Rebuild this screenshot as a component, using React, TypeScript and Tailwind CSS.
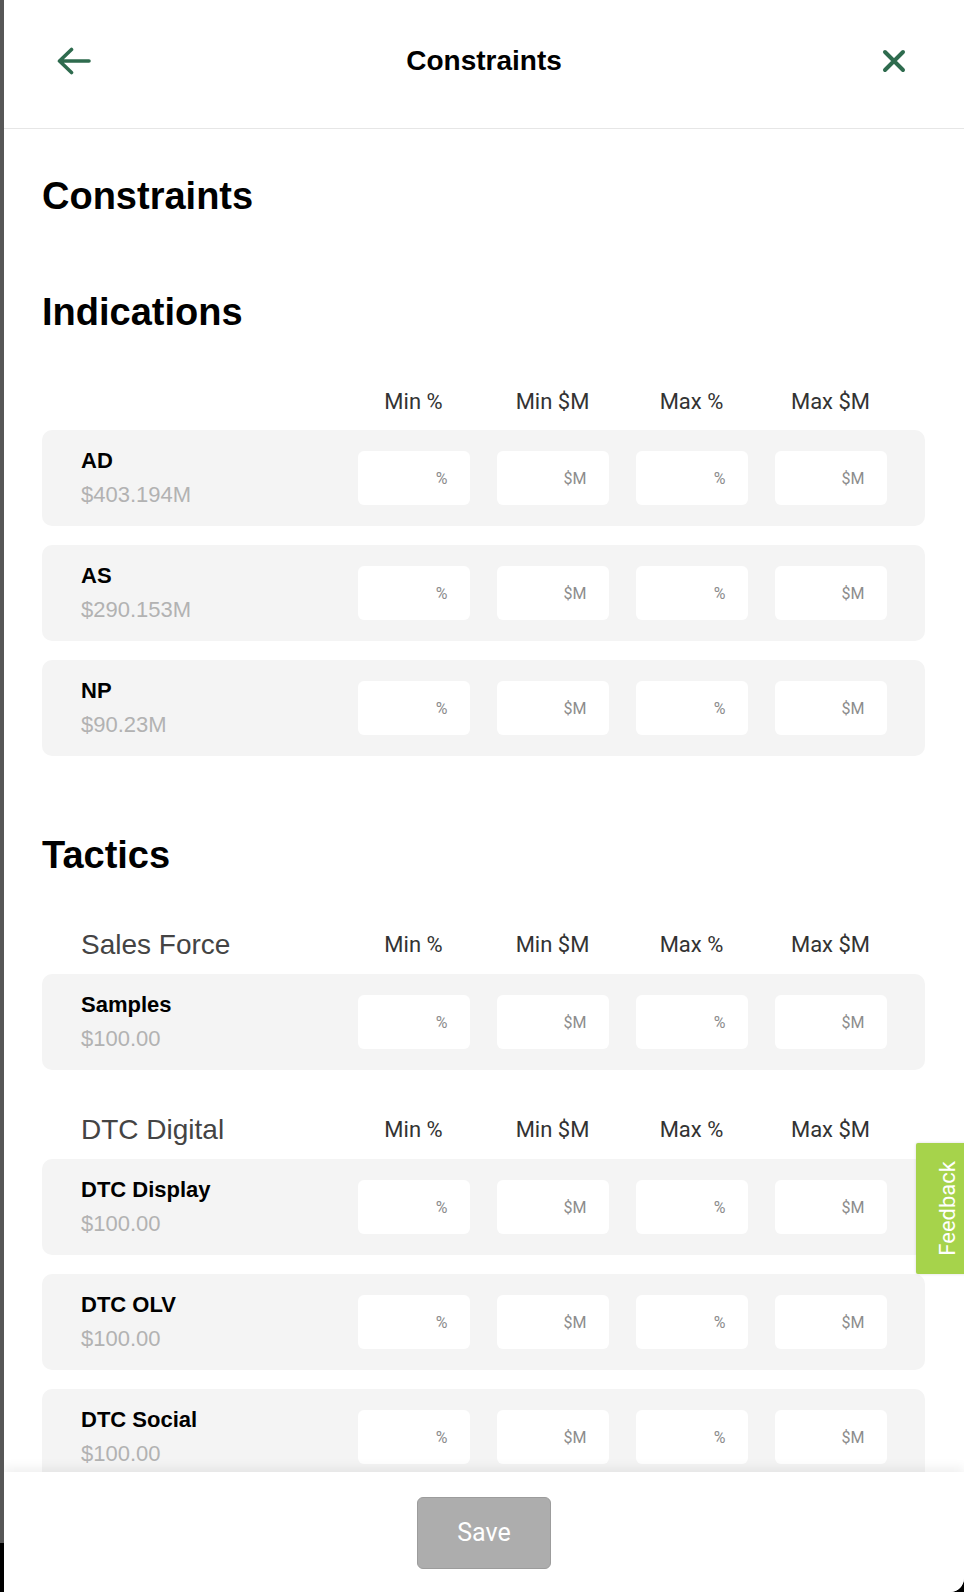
import React from "react";

const HEAD = { fontFamily: '"Liberation Sans", Arial, sans-serif' };
const UI = { fontFamily: 'Roboto, "Noto Sans", sans-serif' };

const COLS = ["Min %", "Min $M", "Max %", "Max $M"];
const PH = ["%", "$M", "%", "$M"];

function HeaderRow({ label, className }: { label?: string; className?: string }) {
  return (
    <div
      className={
        "grid grid-cols-[1fr_139px_139px_139px_139px] items-end pl-[39px] pr-[25px] " +
        (className ?? "")
      }
    >
      <div className="text-[28px] leading-[34px] text-[#444444]" style={HEAD}>
        {label ?? ""}
      </div>
      {COLS.map((c) => (
        <div
          key={c}
          className="pb-[3px] text-center text-[22px] leading-[28px] text-[#333333]"
          style={UI}
        >
          {c}
        </div>
      ))}
    </div>
  );
}

function Row({ name, value, className }: { name: string; value: string; className?: string }) {
  return (
    <div
      className={
        "grid h-[96px] grid-cols-[1fr_139px_139px_139px_139px] items-center rounded-[10px] bg-[#f4f4f4] pl-[39px] pr-[25px] " +
        (className ?? "")
      }
    >
      <div style={HEAD}>
        <div className="text-[22px] font-bold leading-[34px] text-black">{name}</div>
        <div className="text-[22px] leading-[34px] text-[#b2b2b2]">{value}</div>
      </div>
      {PH.map((p, i) => (
        <div key={i} className="flex justify-center">
          <input
            placeholder={p}
            className="h-[54px] w-[112px] rounded-[6px] bg-white pr-[22px] text-right text-[16px] text-[#333] outline-none placeholder:text-[#8c8c8c]"
            style={UI}
          />
        </div>
      ))}
    </div>
  );
}

export default function App() {
  return (
    <div className="relative flex h-[1592px] w-[964px] overflow-hidden bg-black">
      <div className="h-[1543px] w-[4px] shrink-0 bg-[#575757]" />
      <div className="flex h-full w-[960px] flex-col overflow-hidden rounded-br-[14px] bg-white">
        {/* Header */}
        <div className="relative flex h-[129px] shrink-0 items-center justify-between border-b border-[#e6e6e6] pb-[6px] pl-[53px] pr-[58px]">
          <svg width="34" height="28" viewBox="0 0 34 28" fill="none">
            <path
              d="M2.5 14H32M14.5 2.5L2.5 14L14.5 25.5"
              stroke="#2e6b4e"
              strokeWidth="3.6"
              strokeLinecap="round"
              strokeLinejoin="round"
            />
          </svg>
          <div
            className="absolute left-0 right-0 top-[45px] text-center text-[28px] font-bold leading-[32px] text-black"
            style={HEAD}
          >
            Constraints
          </div>
          <svg width="24" height="24" viewBox="0 0 24 24" fill="none">
            <path d="M3 3L21 21M21 3L3 21" stroke="#2e6b4e" strokeWidth="4" strokeLinecap="round" />
          </svg>
        </div>

        {/* Content */}
        <div className="min-h-0 flex-1 overflow-hidden pl-[38px] pr-[39px]">
          <h1 className="mt-[44px] text-[38px] font-bold leading-[46px] text-black" style={HEAD}>
            Constraints
          </h1>
          <h2 className="mt-[70px] text-[38px] font-bold leading-[46px] text-black" style={HEAD}>
            Indications
          </h2>
          <div className="mt-[53px] grid h-[28px] grid-cols-[1fr_139px_139px_139px_139px] pl-[39px] pr-[25px]">
            <div />
            {COLS.map((c) => (
              <div key={c} className="text-center text-[22px] leading-[28px] text-[#333333]" style={UI}>
                {c}
              </div>
            ))}
          </div>
          <div className="mt-[14px] flex flex-col gap-[19px]">
            <Row name="AD" value="$403.194M" />
            <Row name="AS" value="$290.153M" />
            <Row name="NP" value="$90.23M" />
          </div>

          <h2 className="mt-[76px] text-[38px] font-bold leading-[46px] text-black" style={HEAD}>
            Tactics
          </h2>
          <HeaderRow label="Sales Force" className="mt-[50px]" />
          <div className="mt-[12px] flex flex-col gap-[19px]">
            <Row name="Samples" value="$100.00" />
          </div>
          <HeaderRow label="DTC Digital" className="mt-[43px]" />
          <div className="mt-[12px] flex flex-col gap-[19px]">
            <Row name="DTC Display" value="$100.00" />
            <Row name="DTC OLV" value="$100.00" />
            <Row name="DTC Social" value="$100.00" />
          </div>
        </div>

        {/* Footer */}
        <div className="relative z-10 flex h-[120px] shrink-0 items-center justify-center bg-white pt-[2px] shadow-[0_-5px_10px_rgba(0,0,0,0.06)]">
          <button
            className="h-[72px] w-[134px] rounded-[6px] border border-[#9c9c9c] bg-[#adadad] text-[25px] text-white"
            style={UI}
          >
            Save
          </button>
        </div>
      </div>

      {/* Feedback tab */}
      <div className="absolute left-[916px] top-[1143px] flex h-[131px] w-[56px] items-center justify-start rounded-l-[2px] bg-[#a6d34b] pl-[21px] shadow-[0_0_3px_rgba(0,0,0,0.15)]">
        <span
          className="rotate-180 text-[22px] leading-[22px] text-white [writing-mode:vertical-rl]"
          style={UI}
        >
          Feedback
        </span>
      </div>
    </div>
  );
}
